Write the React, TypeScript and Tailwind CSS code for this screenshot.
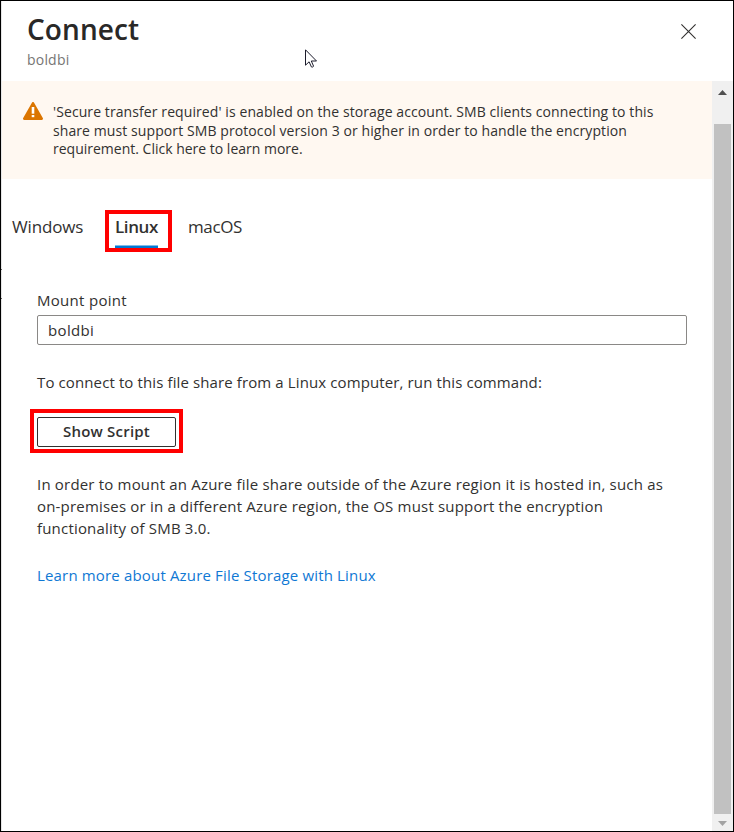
function CloseIcon() {
  return (
    <svg width="15" height="15" viewBox="0 0 15 15" fill="none" stroke="#323130" strokeWidth="1.1">
      <path d="M.4.4l14.200 14.200M14.600.4L.4 14.600" />
    </svg>
  );
}

function WarningIcon() {
  return (
    <svg width="20" height="18" viewBox="0 0 20 18" className="shrink-0">
      <path d="M8.9.7a1.2 1.2 0 0 1 2.2 0l8.7 15.4c.5.9 0 1.9-1 1.9H1.2c-1 0-1.5-1-1-1.9z" fill="#db7500" />
      <path d="M8.700 5h2.600v6.700H8.700z" fill="#fff" />
      <path d="M8.700 13h2.600v2.200H8.700z" fill="#fff" />
    </svg>
  );
}

function Cursor() {
  return (
    <svg width="13" height="20" viewBox="0 0 13 20" className="absolute left-[304px] top-[48px]">
      <path
        d="M.5.8v15.4l3.6-3.4 2.3 5.1c.3.7 2.4-.1 2.1-.9l-2.200-5h5.200z"
        fill="#fff"
        stroke="#1b1b2b"
        strokeWidth="1"
      />
    </svg>
  );
}

function Scrollbar() {
  return (
    <div className="flex w-[21px] shrink-0 flex-col items-center bg-[#f0f0f0]">
      <div className="flex h-[43px] w-full justify-center pt-[9px]">
        <svg width="9" height="5" viewBox="0 0 9 5">
          <path d="M4.500 0L9 5H0z" fill="#505050" />
        </svg>
      </div>
      <div className="h-[690px] w-[17px] bg-[#c1c1c1]" />
      <div className="flex w-full justify-center pt-[7px]">
        <svg width="9" height="5" viewBox="0 0 9 5">
          <path d="M4.500 5L0 0h9z" fill="#a3a3a3" />
        </svg>
      </div>
    </div>
  );
}

export default function App() {
  return (
    <div className="relative flex h-[832px] w-[734px] flex-col overflow-hidden border border-black bg-white font-['Open_Sans',sans-serif] text-[#323130]">
      <header className="flex h-20 shrink-0 justify-between border-l border-[#e6e6e6] pl-[25px] pr-[37px]">
        <div className="pt-2.5">
          <h1 className="h-9 text-[28px] font-semibold leading-9 tracking-[0.1px] text-[#292827]">Connect</h1>
          <p className="mt-[3px] text-[14px] leading-5 tracking-[0.2px] text-[#767574]">boldbi</p>
        </div>
        <button className="mt-[23px] h-[15px] w-[15px]">
          <CloseIcon />
        </button>
      </header>

      <div className="flex min-h-0 flex-1">
        <main className="min-w-0 flex-1 border-l border-[#e6e6e6]">
          <section className="flex h-[98px] bg-[#fff8f1] pl-[21px] pt-[21px]">
            <WarningIcon />
            <p className="ml-2.5 mt-px whitespace-nowrap text-[14px] leading-[18.5px] tracking-[0.09px]">
              'Secure transfer required' is enabled on the storage account. SMB clients connecting to this
              <br />
              share must support SMB protocol version 3 or higher in order to handle the encryption
              <br />
              <span className="tracking-[0px]">requirement. Click here to learn more.</span>
            </p>
          </section>

          <nav className="mt-[31px] flex h-[42px] text-[17px] leading-6">
            <button className="w-[103px] pb-[13px] pl-[10px] pt-[5px] text-left tracking-[-0.15px]">Windows</button>
            <button className="w-[67px] border-4 border-[#ff0000] pl-[6px] text-left font-semibold tracking-[-0.4px]">
              <span className="flex h-[34px] w-[43px] flex-col justify-between pt-px">
                <span className="block">Linux</span>
                <span className="block h-[3px] w-[43px] border-t border-[#80bcea] bg-[#0078d4]" />
              </span>
            </button>
            <button className="pb-[13px] pl-[16px] pt-[5px] tracking-[-0.38px]">macOS</button>
          </nav>

          <div className="pl-[35px] pr-[25px] pt-[38px] text-[15px]">
            <label className="block leading-5 tracking-[0.3px]">Mount point</label>
            <div className="mt-[5px] flex h-[30px] items-center rounded-[2px] border border-[#8a8886] pl-2.5 leading-5 tracking-[0.35px]">
              boldbi
            </div>
            <p className="mt-[27px] leading-5 tracking-[0.115px]">
              To connect to this file share from a Linux computer, run this command:
            </p>
            <div className="-ml-[7px] mt-[17px] h-11 w-[153px] border-4 border-[#ff0000] pl-[3px] pt-1">
              <button className="flex h-[30px] w-[139px] items-center justify-center rounded-[2px] border border-[#323130] pb-[3px] font-semibold leading-5 tracking-[0.2px]">
                Show Script
              </button>
            </div>
            <p className="mt-5 whitespace-nowrap leading-[22px] tracking-[0.188px]">
              In order to mount an Azure file share outside of the Azure region it is hosted in, such as
              <br />
              on-premises or in a different Azure region, the OS must support the encryption
              <br />
              functionality of SMB 3.0.
            </p>
            <a className="mt-[25px] block leading-[22px] tracking-[0.165px] text-[#0f78d4]">
              Learn more about Azure File Storage with Linux
            </a>
          </div>
        </main>
        <Scrollbar />
      </div>
      <Cursor />
      <span className="absolute left-0 top-[268px] h-px w-px bg-[#605e5c]" />
      <span className="absolute left-0 top-[297px] h-px w-px bg-[#605e5c]" />
    </div>
  );
}
